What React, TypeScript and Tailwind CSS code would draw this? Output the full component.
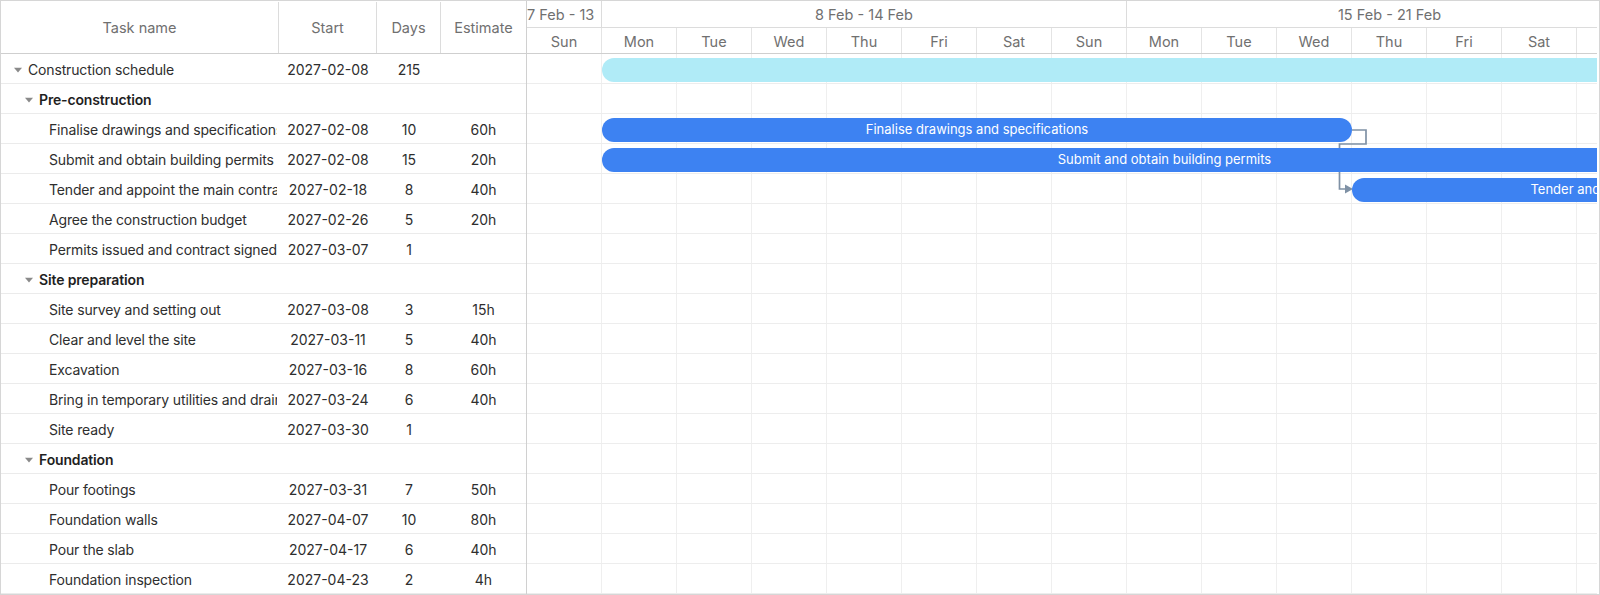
import React from 'react';

type Row = { name: string; level: 0 | 1 | 2; group?: boolean; bold?: boolean; start: string; days: string; est: string };

const rows: Row[] = [
  { name: 'Construction schedule', level: 0, group: true, start: '2027-02-08', days: '215', est: '' },
  { name: 'Pre-construction', level: 1, group: true, bold: true, start: '', days: '', est: '' },
  { name: 'Finalise drawings and specifications', level: 2, start: '2027-02-08', days: '10', est: '60h' },
  { name: 'Submit and obtain building permits', level: 2, start: '2027-02-08', days: '15', est: '20h' },
  { name: 'Tender and appoint the main contractor', level: 2, start: '2027-02-18', days: '8', est: '40h' },
  { name: 'Agree the construction budget', level: 2, start: '2027-02-26', days: '5', est: '20h' },
  { name: 'Permits issued and contract signed', level: 2, start: '2027-03-07', days: '1', est: '' },
  { name: 'Site preparation', level: 1, group: true, bold: true, start: '', days: '', est: '' },
  { name: 'Site survey and setting out', level: 2, start: '2027-03-08', days: '3', est: '15h' },
  { name: 'Clear and level the site', level: 2, start: '2027-03-11', days: '5', est: '40h' },
  { name: 'Excavation', level: 2, start: '2027-03-16', days: '8', est: '60h' },
  { name: 'Bring in temporary utilities and drainage', level: 2, start: '2027-03-24', days: '6', est: '40h' },
  { name: 'Site ready', level: 2, start: '2027-03-30', days: '1', est: '' },
  { name: 'Foundation', level: 1, group: true, bold: true, start: '', days: '', est: '' },
  { name: 'Pour footings', level: 2, start: '2027-03-31', days: '7', est: '50h' },
  { name: 'Foundation walls', level: 2, start: '2027-04-07', days: '10', est: '80h' },
  { name: 'Pour the slab', level: 2, start: '2027-04-17', days: '6', est: '40h' },
  { name: 'Foundation inspection', level: 2, start: '2027-04-23', days: '2', est: '4h' },
];

const dayNames = ['Sun', 'Mon', 'Tue', 'Wed', 'Thu', 'Fri', 'Sat', 'Sun', 'Mon', 'Tue', 'Wed', 'Thu', 'Fri', 'Sat', 'Sun'];

const DAY = 75;

type Bar = { row: number; start: number; len: number; label?: string; summary?: boolean };
const bars: Bar[] = [
  { row: 0, start: 1, len: 215, summary: true },
  { row: 2, start: 1, len: 10, label: 'Finalise drawings and specifications' },
  { row: 3, start: 1, len: 15, label: 'Submit and obtain building permits' },
  { row: 4, start: 11, len: 8, label: 'Tender and appoint the main contractor' },
];

const indent: Record<number, string> = { 0: 'pl-[13px]', 1: 'pl-[24px]', 2: 'pl-[48px]' };

function Caret() {
  return (
    <svg width="8" height="6" viewBox="0 0 8 6" className="shrink-0 mr-[6px]">
      <polygon points="0,0.8 8,0.8 4,5.4" fill="#8a8a8a" />
    </svg>
  );
}

export default function App() {
  return (
    <div
      className="w-[1600px] h-[595px] overflow-hidden bg-white border border-[#d6d6d6] flex text-[14px] text-[#2e2e2e]"
      style={{ fontFamily: 'Inter, "Noto Sans", sans-serif' }}
    >
      {/* Left grid */}
      <div className="w-[526px] shrink-0 border-r border-[#d0d0d0] flex flex-col">
        <div className="h-[53px] shrink-0 flex border-b border-[#cfcfcf] text-[#707070] text-[14.5px] pt-[1px]">
          <div className="w-[278px] shrink-0 border-r border-[#dcdcdc] flex items-center justify-center">Task name</div>
          <div className="w-[98px] shrink-0 border-r border-[#dcdcdc] flex items-center justify-center">Start</div>
          <div className="w-[64px] shrink-0 border-r border-[#dcdcdc] flex items-center justify-center">Days</div>
          <div className="flex-1 flex items-center justify-center">Estimate</div>
        </div>
        {rows.map((r, i) => (
          <div key={i} className="h-[30px] shrink-0 flex items-center border-b border-[#ebebeb] pt-[2px]">
            <div
              className={`w-[276px] mr-[2px] shrink-0 flex items-center overflow-hidden whitespace-nowrap tracking-[-0.15px] ${indent[r.level]} ${
                r.bold ? 'font-semibold text-[#1f1f1f]' : ''
              }`}
            >
              {r.group && <Caret />}
              <span>{r.name}</span>
            </div>
            <div className="w-[98px] shrink-0 text-center">{r.start}</div>
            <div className="w-[64px] shrink-0 text-center">{r.days}</div>
            <div className="flex-1 text-center">{r.est}</div>
          </div>
        ))}
      </div>

      {/* Timeline */}
      <div className="flex-1 min-w-0 mr-[2px] overflow-hidden flex flex-col">
        <div className="w-[1125px] shrink-0 text-[#707070] text-[14.5px]">
          <div className="h-[27px] flex border-b border-[#dcdcdc]">
            <div className="w-[75px] shrink-0 border-r border-[#dcdcdc] leading-[28px]">
              <div className="w-[69px] overflow-hidden whitespace-nowrap">7 Feb - 13 Feb</div>
            </div>
            <div className="w-[525px] shrink-0 border-r border-[#dcdcdc] text-center leading-[28px]">8 Feb - 14 Feb</div>
            <div className="w-[525px] shrink-0 text-center leading-[28px]">15 Feb - 21 Feb</div>
          </div>
          <div className="h-[26px] flex border-b border-[#cfcfcf]">
            {dayNames.map((d, i) => (
              <div key={i} className="w-[75px] shrink-0 border-r border-[#e4e4e4] text-center leading-[27px]">
                {d}
              </div>
            ))}
          </div>
        </div>
        <div className="relative w-[1125px] flex-1">
          {rows.map((_, i) => (
            <div key={i} className="h-[30px] flex border-b border-[#ededed]">
              {dayNames.map((_, j) => (
                <div key={j} className="w-[75px] shrink-0 border-r border-[#efefef]" />
              ))}
            </div>
          ))}
          <svg className="absolute left-0 top-0 w-[1125px] h-[200px]" viewBox="0 0 1125 200">
            <path d="M825 76 H839 V90 H812.5 V135 H820" fill="none" stroke="#7f91a5" strokeWidth="1.7" />
            <polygon points="818,130.5 826,135 818,139.5" fill="#7f91a5" />
          </svg>
          {bars.map((b, i) => (
            <div
              key={i}
              className={`absolute h-[24px] rounded-full overflow-hidden flex items-center justify-center whitespace-nowrap text-[13px] z-10 ${
                b.summary ? 'bg-[#b0ebf7]' : 'bg-[#3d82f2] text-white'
              }`}
              style={{ left: b.start * DAY, width: b.len * DAY, top: b.row * 30 + 4 }}
            >
              {b.label}
            </div>
          ))}
        </div>
      </div>
    </div>
  );
}
